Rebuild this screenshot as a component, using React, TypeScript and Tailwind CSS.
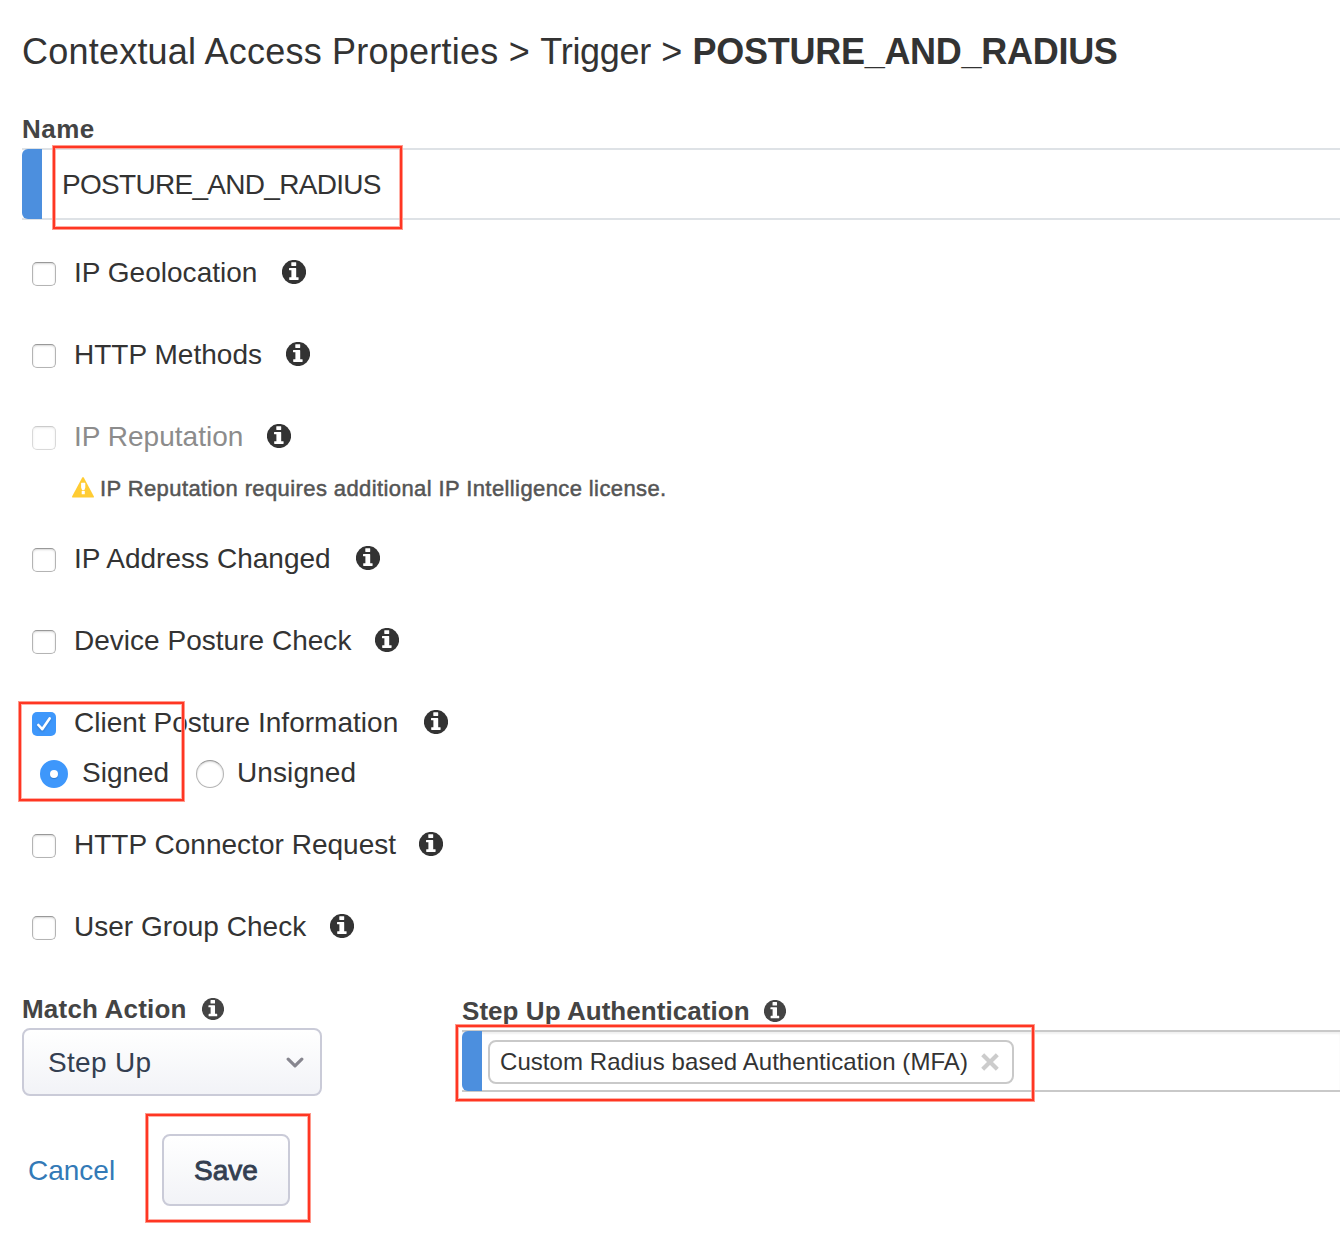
import React from "react";

function InfoIcon({ className }: { className: string }) {
  return (
    <svg className={`shrink-0 ${className}`} viewBox="0 0 24 24">
      <circle cx="12" cy="12" r="12.1" fill="currentColor" />
      <path fill="#fff" d="M9.7 2.2h4.1q.4 0 .4.4v3q0 .4-.4.4H9.7q-.4 0-.4-.4v-3q0-.4.4-.4zM7.4 8h6.4q.4 0 .4.4v8.8h2q.4 0 .4.4v2q0 .4-.4.4H7.6q-.4 0-.4-.4v-2q0-.4.4-.4h1.8v-7H7.4q-.4 0-.4-.4V8.400q0-.4.4-.4z" />
    </svg>
  );
}

function WarningIcon() {
  return (
    <svg viewBox="0 0 22 21" className="mb-px mr-[6px] h-[21px] w-[22px] shrink-0">
      <path fill="#ffcc33" d="M11.9.7L21.800 19.300Q22.300 20.600 21 20.600H1Q-.3 20.600.2 19.300L10.100.7Q11-.5 11.900.7z" />
      <path fill="#fff" d="M9.500 5.800h3.400q.4 0 .4.4v4.300L12.300 13.200h-2.200L9.100 10.500V6.200q0-.4.4-.4zM9.700 14h3.100v3.200H9.700z" />
    </svg>
  );
}

function Checkbox({ checked, disabled }: { checked?: boolean; disabled?: boolean }) {
  if (checked) {
    return (
      <span className="mt-[3px] flex size-6 shrink-0 items-center justify-center rounded-[5px] bg-[#3e97fb]">
        <svg viewBox="0 0 24 24" className="size-6 drop-shadow-[0_1px_1px_rgba(0,0,0,0.2)]" fill="none" stroke="#fff" strokeWidth="2.6" strokeLinecap="round" strokeLinejoin="round">
          <path d="M6.4 13L10.2 17.2L17.6 6.4" />
        </svg>
      </span>
    );
  }
  return (
    <span
      className={`mt-[3px] size-6 shrink-0 rounded-[5px] border border-[#b4b4b4] border-t-[#999] bg-white shadow-[inset_0_1px_2px_rgba(0,0,0,0.16)] ${disabled ? "opacity-50" : ""}`}
    />
  );
}

type Option = {
  label: string;
  width: string;
  checked?: boolean;
  disabled?: boolean;
};

function OptionRow({ label, width, checked, disabled }: Option) {
  return (
    <label className="flex h-[82px] items-center pl-[10px]">
      <Checkbox checked={checked} disabled={disabled} />
      <span className={`ml-[18px] shrink-0 whitespace-nowrap pt-[2px] text-[28px] leading-8 tracking-[0.02px] ${width} ${disabled ? "text-[#8c8c8c]" : ""}`}>
        {label}
      </span>
      <InfoIcon className="ml-px size-6" />
    </label>
  );
}

function Highlight({ className }: { className: string }) {
  return (
    <div className={`pointer-events-none absolute border-2 border-[#ff3623] shadow-[0_0_0_1px_#ff9a8d,inset_0_0_0_1px_rgba(255,150,137,0.75)] ${className}`} />
  );
}

export default function App() {
  return (
    <main className="h-[1236px] w-[1340px] overflow-hidden bg-white pl-[22px] font-['Liberation_Sans',Arial,sans-serif] text-[#333]">
      <h1 className="flex h-[104px] items-center whitespace-pre text-[36px]">
        <span className="tracking-[0.22px]">Contextual Access Properties</span>
        <span className="tracking-[0.3px]">{" > "}</span>
        <span className="tracking-[-0.3px]">Trigger</span>
        <span className="tracking-[0.2px]">{" > "}</span>
        <strong className="tracking-[-0.28px]">POSTURE_AND_RADIUS</strong>
      </h1>

      <section>
        <div className="flex h-11 items-center pt-[6px] text-[26px] font-bold text-[#444]">
          <span className="tracking-[0.5px]">Name</span>
        </div>
        <div className="relative flex h-[72px] border-y-2 border-[#dee2e6]">
          <span className="-my-px w-5 rounded-l-[6px] bg-[#4c8fde]" />
          <span className="flex items-center pl-[20px] pt-px text-[28px]">
            <span className="tracking-[-0.7px]">POSTURE_AND_RADIUS</span>
          </span>
          <Highlight className="-top-[4px] left-[31px] h-[83px] w-[349px]" />
        </div>
      </section>

      <section className="pt-[11px]">
        <OptionRow label="IP Geolocation" width="w-[207px]" />
        <OptionRow label="HTTP Methods" width="w-[211px]" />
        <OptionRow label="IP Reputation" width="w-[192px]" disabled />
        <div className="mb-[18px] flex h-[22px] items-center pl-[50px] text-[22px] text-[#555]">
          <WarningIcon />
          <span className="tracking-[0.4px] [-webkit-text-stroke:0.5px_#555]">IP Reputation requires additional IP Intelligence license.</span>
        </div>
        <OptionRow label="IP Address Changed" width="w-[280.5px]" />
        <OptionRow label="Device Posture Check" width="w-[300px]" />
        <div className="relative">
          <OptionRow label="Client Posture Information" width="w-[348.5px]" checked />
          <div className="mb-5 flex h-5 items-center pl-[18px] text-[28px]">
            <span className="mt-[2px] flex size-7 items-center justify-center rounded-full bg-[#3e97fb]">
              <span className="size-2 rounded-full bg-white shadow-[0_1px_1px_rgba(0,0,0,0.2)]" />
            </span>
            <span className="ml-[14px] w-[114px]">Signed</span>
            <span className="mt-[2px] size-7 rounded-full border border-[#b4b4b4] border-t-[#999] bg-white shadow-[inset_0_1px_2px_rgba(0,0,0,0.16)]" />
            <span className="ml-[13px] tracking-[0.1px]">Unsigned</span>
          </div>
          <Highlight className="-left-[3px] top-[21px] h-[99px] w-[165px]" />
        </div>
        <OptionRow label="HTTP Connector Request" width="w-[344px]" />
        <OptionRow label="User Group Check" width="w-[255px]" />
      </section>

      <section className="flex items-start pt-[23px]">
        <div className="w-[440px]">
          <div className="flex h-[38px] items-center text-[26px] font-bold text-[#444]">
            <span className="w-[180px] tracking-[0.2px]">Match Action</span>
            <InfoIcon className="size-[22px]" />
          </div>
          <button className="flex h-[68px] w-[300px] items-center justify-between rounded-[8px] border-2 border-[#cacbd8] bg-gradient-to-b from-white to-[#f2f3f7] pl-6 pr-4 text-[28px] text-[#343f51]">
            <span className="pt-[2px] tracking-[0.3px]">Step Up</span>
            <svg viewBox="0 0 18 12" className="mt-px h-3 w-[18px]" fill="none" stroke="#87868f" strokeWidth="3.2" strokeLinecap="round" strokeLinejoin="round">
              <path d="M2.2 2.2L9 8.8L15.8 2.2" />
            </svg>
          </button>
        </div>
        <div className="flex-1">
          <div className="flex h-10 items-center pt-[2px] text-[26px] font-bold text-[#444]">
            <span className="w-[302px] tracking-[0.05px]">Step Up Authentication</span>
            <InfoIcon className="size-[22px]" />
          </div>
          <div className="relative flex h-[62px] border-y-2 border-[#c9c9c9] shadow-[inset_0_2px_2px_rgba(0,0,0,0.06)]">
            <span className="-my-px w-5 rounded-l-[6px] bg-[#4c8fde]" />
            <span className="ml-[6px] mt-2 flex h-11 w-[526px] items-center rounded-[8px] border-2 border-[#c9c9c9] bg-white pl-[10px] text-[24px]">
              <span className="w-[481px] whitespace-nowrap tracking-[0.06px]">Custom Radius based Authentication (MFA)</span>
              <svg viewBox="0 0 18 18" className="size-[18px]" fill="none" stroke="#ccc" strokeWidth="4.2">
                <path d="M1.7 1.7L16.3 16.3M16.3 1.7L1.7 16.3" />
              </svg>
            </span>
            <Highlight className="-left-[6px] -top-[7px] h-[76px] w-[578px]" />
          </div>
        </div>
      </section>

      <section className="flex items-center pt-[38px] text-[28px]">
        <a className="ml-[6px] w-[134px] pt-[2px] text-[#337ab7]">Cancel</a>
        <div className="relative">
          <button className="h-[72px] w-32 rounded-[8px] border-2 border-[#cacbd8] bg-gradient-to-b from-white to-[#f2f3f7] pt-[2px] text-[#343f51]">
            <span className="[-webkit-text-stroke:0.9px_#343f51]">Save</span>
          </button>
          <Highlight className="-left-[16px] -top-[20px] h-[108px] w-[164px]" />
        </div>
      </section>
    </main>
  );
}
